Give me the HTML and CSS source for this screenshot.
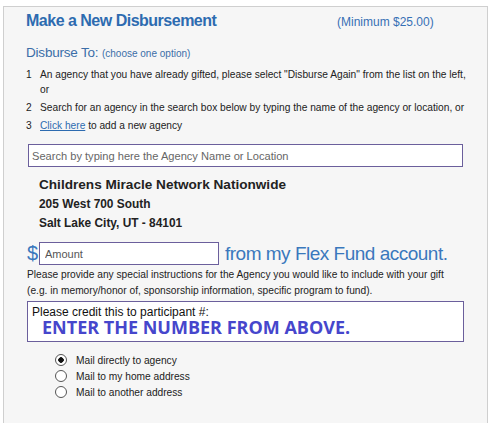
FILE: index.html
```html
<!DOCTYPE html>
<html>
<head>
    <link rel="stylesheet" href="styles.css">
</head>
<body>
    <div class="panel">
        <div class="title-row">
            <h1 class="title">Make a New Disbursement</h1>
            <span class="minimum">(Minimum $25.00)</span>
        </div>
        <div class="disburse-to">Disburse To: <span class="hint">(choose one option)</span></div>
        <ol class="options">
            <li><span class="num">1</span><span>An agency that you have already gifted, please select "Disburse Again" from the list on the left, or</span></li>
            <li><span class="num">2</span><span>Search for an agency in the search box below by typing the name of the agency or location, or</span></li>
            <li><span class="num">3</span><span><a href="#">Click here</a> to add a new agency</span></li>
        </ol>
        <input type="text" class="search" placeholder="Search by typing here the Agency Name or Location">
        <div class="agency">
            <div class="agency-name">Childrens Miracle Network Nationwide</div>
            <div class="agency-line">205 West 700 South</div>
            <div class="agency-line">Salt Lake City, UT - 84101</div>
        </div>
        <div class="amount-row">
            <span class="dollar">$</span>
            <input type="text" class="amount" placeholder="Amount">
            <span class="from">from my Flex Fund account.</span>
        </div>
        <p class="instructions">Please provide any special instructions for the Agency you would like to include with your gift (e.g. in memory/honor of, sponsorship information, specific program to fund).</p>
        <div class="credit">
            <div class="credit-label">Please credit this to participant #:</div>
            <div class="credit-value">ENTER THE NUMBER FROM ABOVE.</div>
        </div>
        <div class="mail">
            <label><input type="radio" name="mail" checked> Mail directly to agency</label>
            <label><input type="radio" name="mail"> Mail to my home address</label>
            <label><input type="radio" name="mail"> Mail to another address</label>
        </div>
    </div>
</body>
</html>
```

FILE: styles.css
```css
body
{
    margin: 0;
    font-family: "Liberation Sans", Arial, sans-serif;
    background-color: #fff;
}
.panel
{
    margin: 6px 0 0 3px;
    width: 485px;
    height: 430px;
    background-color: #f6f6f6;
    border: 1px solid #cfcfcf;
    border-bottom: none;
    padding: 5px 0 0 22px;
    box-sizing: border-box;
}
.title-row
{
    display: flex;
    align-items: baseline;
}
.title
{
    margin: 0;
    font-size: 16px;
    letter-spacing: -0.5px;
    font-weight: bold;
    color: #2d6bb0;
    width: 311px;
}
.minimum
{
    font-size: 12px;
    color: #3670b5;
}
.disburse-to
{
    margin-top: 15px;
    font-size: 13.5px;
    letter-spacing: -0.2px;
    color: #3b6ea8;
}
.disburse-to .hint
{
    font-size: 10px;
    letter-spacing: 0;
}
.options
{
    list-style: none;
    margin: 7px 0 0 0;
    padding: 0;
    width: 450px;
    font-size: 10.2px;
    color: #222;
}
.options li
{
    display: flex;
    line-height: 15px;
    margin-bottom: 3px;
}
.options .num
{
    width: 14px;
    flex-shrink: 0;
}
.options a
{
    color: #2d6bb0;
}
.search
{
    display: block;
    margin: 11px 0 0 2px;
    width: 435px;
    height: 23px;
    box-sizing: border-box;
    border: 1px solid #6b5f9c;
    padding: 0 3px;
    font-family: "Liberation Sans", Arial, sans-serif;
    font-size: 11.1px;
}
.search::placeholder
{
    color: #666;
}
.agency
{
    margin: 8px 0 0 13px;
    font-weight: bold;
    color: #222;
}
.agency-name
{
    font-size: 13.6px;
    line-height: 20px;
}
.agency-line
{
    font-size: 11.9px;
    line-height: 19px;
}
.amount-row
{
    display: flex;
    align-items: center;
    margin-top: 9px;
    margin-left: 1px;
}
.dollar
{
    font-size: 20px;
    color: #3a78bd;
    width: 12px;
}
.amount
{
    width: 180px;
    height: 23px;
    box-sizing: border-box;
    border: 1px solid #6b5f9c;
    padding: 0 5px;
    font-family: "Liberation Sans", Arial, sans-serif;
    font-size: 11px;
}
.amount::placeholder
{
    color: #555;
}
.from
{
    margin-left: 6px;
    font-size: 19px;
    letter-spacing: -0.5px;
    color: #3a78bd;
}
.instructions
{
    margin: 2px 0 0 1px;
    width: 430px;
    font-size: 10.2px;
    line-height: 16px;
    color: #222;
}
.credit
{
    margin: 2px 0 0 1px;
    width: 437px;
    height: 41px;
    box-sizing: border-box;
    border: 1px solid #6b5f9c;
    background-color: #fff;
    padding: 5px 4px 0;
}
.credit-label
{
    font-size: 12px;
    line-height: 11px;
    color: #111;
}
.credit-value
{
    margin: 2px 0 0 10px;
    font-family: "Open Sans", sans-serif;
    font-weight: bold;
    font-size: 18px;
    line-height: 14px;
    color: #4646cc;
}
.mail
{
    margin: 10px 0 0 27px;
    display: flex;
    flex-direction: column;
    font-size: 10.2px;
    color: #222;
}
.mail label
{
    display: flex;
    align-items: center;
    height: 16px;
}
.mail input
{
    appearance: none;
    margin: 0 9px 0 2px;
    width: 12px;
    height: 12px;
    border: 1px solid #555;
    border-radius: 50%;
    background-color: #fff;
}
.mail input:checked
{
    background: radial-gradient(circle, #111 0, #111 2.5px, #fff 3px);
}
```
